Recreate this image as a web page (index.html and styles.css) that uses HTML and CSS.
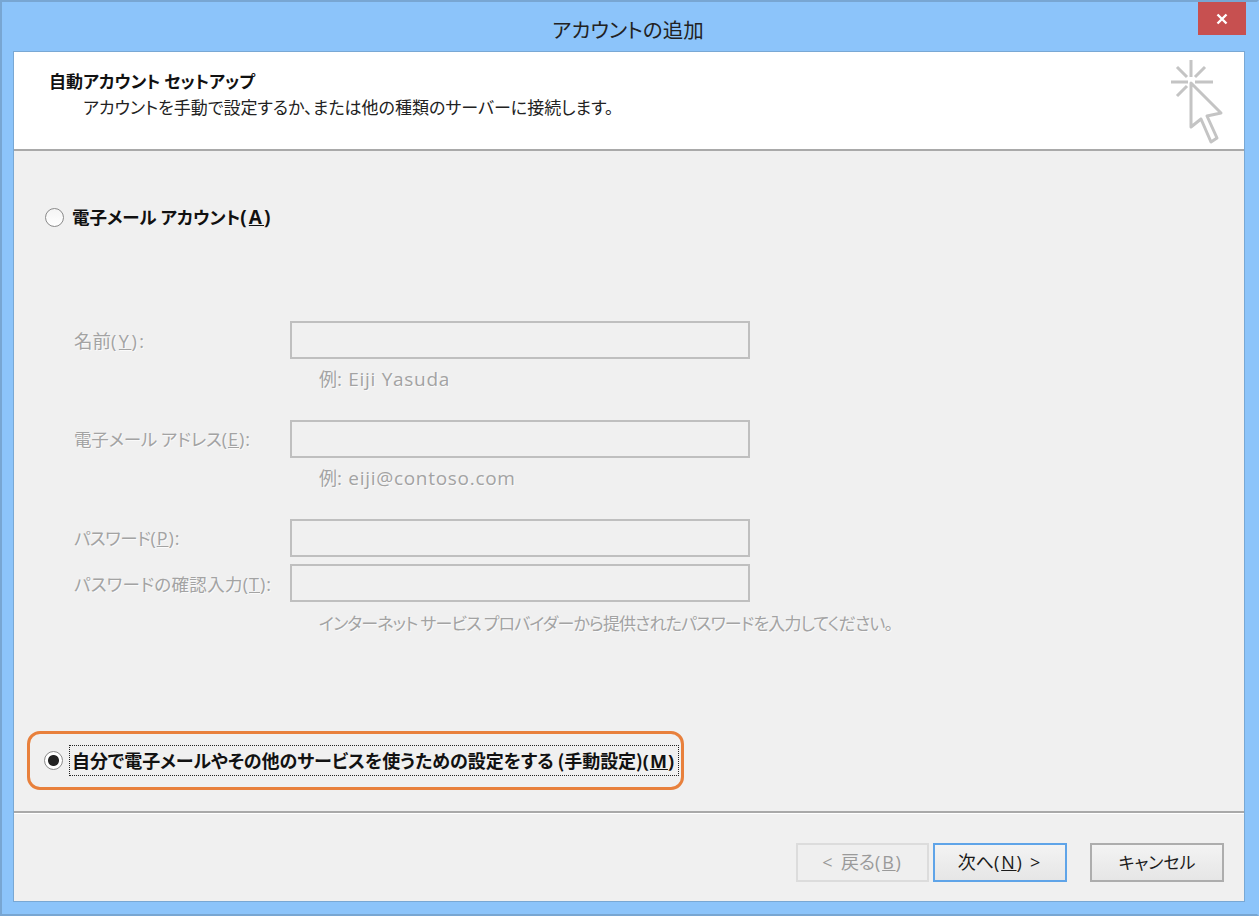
FILE: index.html
```html
<!DOCTYPE html>
<html lang="ja">
<head>
<meta charset="utf-8">
<title>アカウントの追加</title>
<link rel="stylesheet" href="styles.css">
</head>
<body>
<div class="window">
  <div class="titlebar">
    <span class="title">アカウントの追加</span>
    <div class="close">
      <svg width="12" height="12" viewBox="0 0 12 12"><path d="M1.500 1.500l9 9M10.500 1.500l-9 9" stroke="#fff" stroke-width="2.400" fill="none"/></svg>
    </div>
  </div>
  <div class="client">
    <header class="head">
      <div class="head-text">
        <div class="head-title">自動アカウント セットアップ</div>
        <div class="head-sub">アカウントを手動で設定するか、または他の種類のサーバーに接続します。</div>
      </div>
      <svg class="wizard" width="56" height="86" viewBox="0 0 56 86">
        <g stroke="#c4c4c4" stroke-width="3" fill="none">
          <path d="M21 1v17M1 23h17M25 23h18M7 8l10 10M35 8L25 18M7 37l10-10"/>
          <path d="M21 24l30 30-14 3 10 22-6 4-10-23-10 8z" fill="#fff" stroke-linejoin="round"/>
        </g>
      </svg>
    </header>
    <main class="body">
      <label class="choice first"><span class="radio"></span><span class="choice-text">電子メール アカウント<span class="en">(<u>A</u>)</span></span></label>
      <div class="form">
        <div class="row"><span class="lbl wide">名前<span class="en">(<u>Y</u>):</span></span><span class="field"></span></div>
        <div class="hint gap">例<span class="en">: Eiji Yasuda</span></div>
        <div class="row"><span class="lbl mail">電子メール アドレス<span class="en">(<u>E</u>):</span></span><span class="field"></span></div>
        <div class="hint gap">例<span class="en">: eiji@contoso.com</span></div>
        <div class="row"><span class="lbl narrow">パスワード<span class="en">(<u>P</u>):</span></span><span class="field"></span></div>
        <div class="row next"><span class="lbl confirm">パスワードの確認入力<span class="en">(<u>T</u>):</span></span><span class="field"></span></div>
        <div class="hint tight">インターネット サービス プロバイダーから提供されたパスワードを入力してください。</div>
      </div>
      <div class="mark">
        <label class="choice"><span class="radio on"></span><span class="choice-text long focus">自分で電子メールやその他のサービスを使うための設定をする (手動設定)<span class="en">(<u>M</u>)</span></span></label>
      </div>
    </main>
    <footer class="foot">
      <button class="btn off"><span class="en">&lt; </span>戻る<span class="en">(<u>B</u>)</span></button>
      <button class="btn def">次へ<span class="en">(<u>N</u>) &gt;</span></button>
      <button class="btn cancel">キャンセル</button>
    </footer>
  </div>
</div>
</body>
</html>
```
FILE: styles.css
```css
* { box-sizing: border-box; }
html, body { margin: 0; padding: 0; }
body {
  width: 1259px;
  height: 916px;
  overflow: hidden;
  background: #8cc4fa;
  font-family: "Noto Sans CJK JP", "Noto Sans", sans-serif;
  font-feature-settings: "palt";
  font-size: 17px;
  color: #1a1a1a;
}
.en { font-family: "Open Sans", "Noto Sans", sans-serif; font-size: 18px; letter-spacing: 1px; }
.window {
  height: 916px;
  display: flex;
  flex-direction: column;
  background: #8cc4fa;
  border: 2px solid #78a6d2;
  border-right-color: #8cc4fa;
  padding: 0 12px 12px 11px;
}
.titlebar {
  height: 49px;
  flex: none;
  position: relative;
  display: flex;
  justify-content: center;
  padding-top: 10px;
}
.title { font-size: 20.500px; line-height: 34px; color: #222; margin-left: -2px; }
.close {
  position: absolute;
  right: -1px;
  top: 0;
  width: 48px;
  height: 33px;
  background: #c75050;
  display: flex;
  align-items: center;
  justify-content: center;
}
.client {
  flex: 1;
  display: flex;
  flex-direction: column;
  background: #f0f0f0;
  border: 1px solid #79a8d4;
  min-height: 0;
}
.head {
  height: 99px;
  flex: none;
  background: #fff;
  border-bottom: 2px solid #a9a9a9;
  display: flex;
  justify-content: space-between;
  padding: 16px 18px 0 35px;
}
.head-title { font-weight: 700; line-height: 26px; font-size: 17px; color: #111; }
.head-sub { padding-left: 34px; line-height: 26px; color: #222; }
.wizard { margin-top: -9px; }
.body { flex: 1; padding: 0 12px 0 13px; min-height: 0; display: flex; flex-direction: column; }
.choice { display: flex; align-items: center; }
.choice.first { margin: 49px 0 0 18px; height: 34px; }
.radio {
  width: 19px;
  height: 19px;
  flex: none;
  border-radius: 50%;
  background: linear-gradient(#f4f4f4, #fff);
  border: 1.500px solid #8a8a8a;
  margin-right: 8px;
  display: block;
}
.radio.on {
  margin-right: 7px;
  background: radial-gradient(circle, #222 0, #222 5px, #fff 6px);
}
.choice-text { font-weight: 700; font-size: 17.500px; color: #111; line-height: 26px; white-space: nowrap; }
.choice-text .en { font-weight: 700; letter-spacing: 2.100px; font-size: 19px; }
.choice-text.long { font-size: 18px; letter-spacing: -0.050px; }
.choice-text.long .en { font-size: 18px; letter-spacing: 1px; }
.focus { outline: 1.500px dotted #222; outline-offset: 0; padding: 1px 3px 1px 2px; }
.form {
  margin: 87px 0 0 47px;
  color: #a3a3a3;
  text-shadow: 1px 1px 0 rgba(255, 255, 255, 0.7);
}
.row { display: flex; align-items: center; height: 38px; }
.row.next { margin-top: 7px; }
.lbl { width: 216px; flex: none; font-size: 17.500px; padding-bottom: 2px; white-space: nowrap; }
.lbl.wide { font-size: 18.500px; padding-bottom: 1px; }
.lbl.wide .en { letter-spacing: 2.500px; }
.lbl.narrow { letter-spacing: -0.500px; }
.lbl.mail { letter-spacing: -0.150px; }
.lbl.confirm { letter-spacing: 0.300px; padding-bottom: 0; }
.field {
  width: 460px;
  height: 38px;
  background: #f0f0f0;
  border: 2px solid #bfbfbf;
  display: block;
}
.hint { margin-left: 245px; font-size: 18px; line-height: 24px; padding-top: 7px; height: 40px; white-space: nowrap; }
.hint.gap { height: 61px; }
.hint .en { font-size: 19px; letter-spacing: 0.700px; }
.hint.tight { font-size: 17px; letter-spacing: -0.850px; padding-top: 9px; }
.mark {
  margin-top: auto;
  margin-bottom: 21px;
  width: 657px;
  height: 59px;
  border: 3px solid #e8803c;
  border-radius: 13px;
  display: flex;
  align-items: center;
  padding-left: 14px;
}
.foot {
  height: 90px;
  flex: none;
  border-top: 2px solid #a9a9a9;
  box-shadow: inset 0 1px 0 #fff;
  display: flex;
  justify-content: flex-end;
  padding: 30px 20px 0 0;
  align-items: flex-start;
}
.btn {
  width: 134px;
  height: 39px;
  font: inherit;
  font-size: 18px;
  padding: 0 0 3px;
  color: #1a1a1a;
  background: linear-gradient(#f3f3f3, #e6e6e6);
  border: 2px solid #adadad;
}
.btn .en { letter-spacing: 1.800px; }
.btn.off { width: 133px; background: #efefef; border-color: #dcdcdc; color: #9a9a9a; }
.btn.def { border-color: #5fa4e8; margin-left: 4px; }
.btn.cancel { margin-left: 23px; font-size: 17px; }
```
